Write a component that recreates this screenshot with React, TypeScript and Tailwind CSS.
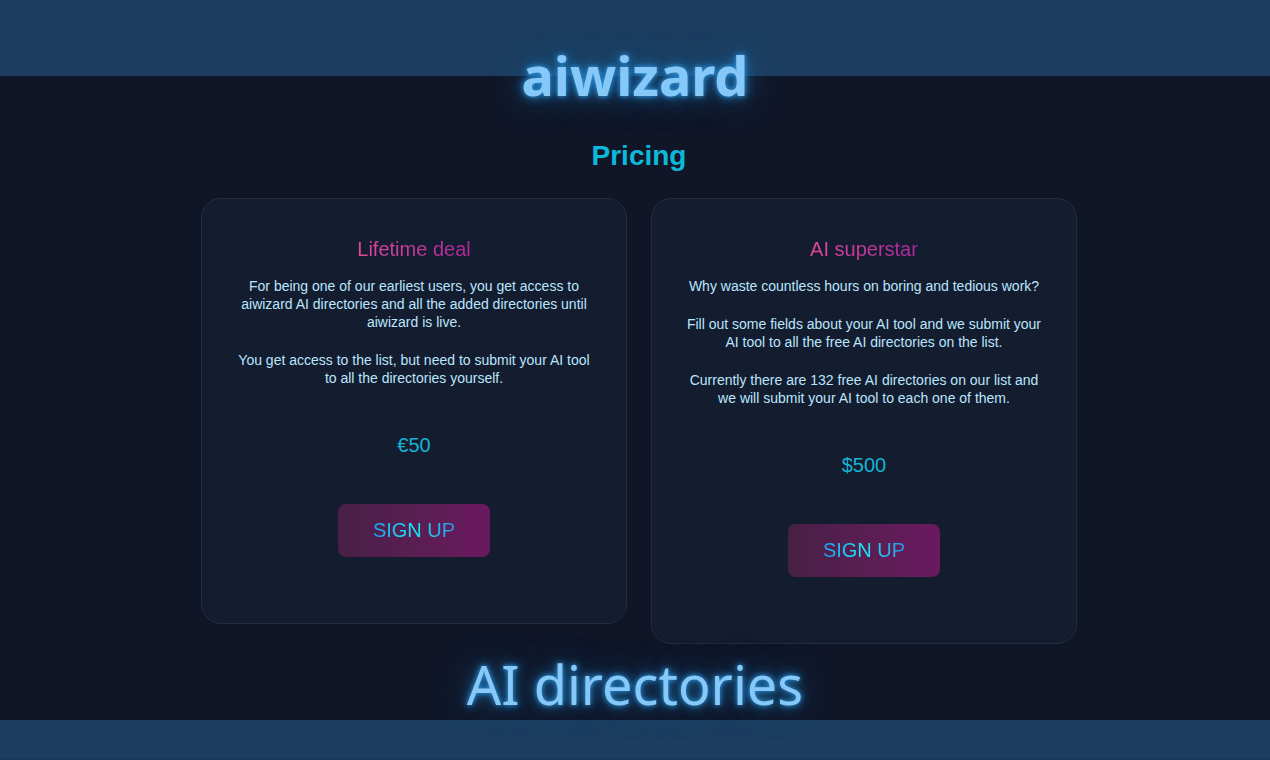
type Plan = {
  name: string;
  paragraphs: string[];
  price: string;
};

const plans: Plan[] = [
  {
    name: 'Lifetime deal',
    paragraphs: [
      'For being one of our earliest users, you get access to aiwizard AI directories and all the added directories until aiwizard is live.',
      'You get access to the list, but need to submit your AI tool to all the directories yourself.',
    ],
    price: '€50',
  },
  {
    name: 'AI superstar',
    paragraphs: [
      'Why waste countless hours on boring and tedious work?',
      'Fill out some fields about your AI tool and we submit your AI tool to all the free AI directories on the list.',
      'Currently there are 132 free AI directories on our list and we will submit your AI tool to each one of them.',
    ],
    price: '$500',
  },
];

const PlanCard = ({ plan }: { plan: Plan }) => (
  <article className="flex flex-col items-center rounded-[20px] border border-[#222d40] bg-[#141c2f] px-8 pt-9 pb-[66px] text-center">
    <h3 className="bg-linear-to-r from-[#e0489c] to-[#a8289a] bg-clip-text text-xl leading-7 text-transparent">
      {plan.name}
    </h3>
    <div className="mt-[14px] flex flex-col gap-5 text-sm leading-[18px] text-[#bae6fd]">
      {plan.paragraphs.map((text) => (
        <p key={text}>{text}</p>
      ))}
    </div>
    <p className="mt-11 text-xl leading-7 text-[#14b4d4]">{plan.price}</p>
    <button
      type="button"
      className="mt-[45px] cursor-pointer rounded-lg bg-linear-to-r from-[#482046] to-[#6b195f] px-[35px] py-3 text-xl leading-[29px]"
    >
      <span className="bg-linear-to-r from-[#1ea0f0] via-[#14f0fa] to-[#2a92e0] bg-clip-text text-transparent">
        SIGN UP
      </span>
    </button>
  </article>
);

const glow =
  'font-["Noto_Sans",sans-serif] text-[54px] leading-20 text-[#86c8f8] [text-shadow:0_0_5px_#2f9be8,0_0_12px_#1f78b8,0_0_32px_#1c5a88]';

const App = () => {
  return (
    <div className='min-h-screen bg-[#1c3d5f] font-["Liberation_Sans",Arial,sans-serif]'>
      <header className="flex h-19 justify-center pt-[35px]">
        {/* The title hangs over the lower edge of the band */}
        <h1 className={`relative z-10 h-19 font-bold ${glow}`}>aiwizard</h1>
      </header>

      <main className="bg-[#101628] pt-[60px]">
        <section className="mx-auto max-w-[884px] pl-2">
          <h2 className="text-center text-[28px] leading-10 font-bold text-[#0eb8d8]">Pricing</h2>
          <div className="mt-[22px] grid grid-cols-1 items-start gap-6 md:grid-cols-2">
            {plans.map((plan) => (
              <PlanCard key={plan.name} plan={plan} />
            ))}
          </div>
        </section>
        <h2 className={`relative z-10 h-19 text-center ${glow}`}>AI directories</h2>
      </main>

      <footer className="h-10 border-b-2 border-[#1a3858]" />
    </div>
  );
};

export default App;
